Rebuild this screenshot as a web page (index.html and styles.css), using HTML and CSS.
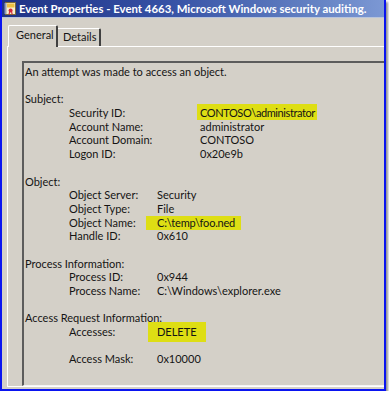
FILE: index.html
```html
<!DOCTYPE html>
<html lang="en">
<head>
    <meta charset="UTF-8">
    <title>Event Properties</title>
    <link rel="stylesheet" href="styles.css">
</head>
<body>
    <div class="window">
        <!-- Title bar -->
        <div class="titlebar">
            <svg class="app-icon" width="12" height="13" viewBox="0 0 12 13">
                <rect x="1.5" y="0.5" width="10" height="12" fill="#f6efd0" stroke="#7a6a3a"/>
                <rect x="0.5" y="1" width="2" height="11" fill="#8e9ab4"/>
                <rect x="3" y="1.5" width="7.5" height="4" fill="#ecc040"/>
                <circle cx="6.6" cy="8.6" r="2" fill="#d6283a"/>
                <path d="M5.6 10 L5 12.5 M7.6 10 L8.2 12.5" stroke="#d6283a" stroke-width="1.1"/>
            </svg>
            <span class="title-text">Event Properties - Event 4663, Microsoft Windows security auditing.</span>
        </div>

        <div class="client">
            <div class="tabs">
                <div class="tab active">General</div>
                <div class="tab">Details</div>
            </div>

            <div class="panel">
                <div class="event-text">
                    <p class="line">An attempt was made to access an object.</p>
                    <p class="line"></p>

                    <p class="line">Subject:</p>
                    <div class="field wide"><span>Security ID:</span><span><span class="hl hl-sid">CONTOSO\administrator</span></span></div>
                    <div class="field wide"><span>Account Name:</span><span>administrator</span></div>
                    <div class="field wide"><span>Account Domain:</span><span>CONTOSO</span></div>
                    <div class="field wide"><span>Logon ID:</span><span>0x20e9b</span></div>
                    <p class="line"></p>

                    <p class="line">Object:</p>
                    <div class="field"><span>Object Server:</span><span>Security</span></div>
                    <div class="field"><span>Object Type:</span><span>File</span></div>
                    <div class="field"><span>Object Name:</span><span><span class="hl hl-obj">C:\temp\foo.ned</span></span></div>
                    <div class="field"><span>Handle ID:</span><span>0x610</span></div>
                    <p class="line"></p>

                    <p class="line">Process Information:</p>
                    <div class="field"><span>Process ID:</span><span>0x944</span></div>
                    <div class="field"><span>Process Name:</span><span>C:\Windows\explorer.exe</span></div>
                    <p class="line"></p>

                    <p class="line">Access Request Information:</p>
                    <div class="field"><span>Accesses:</span><span><span class="hl hl-del">DELETE</span></span></div>
                    <p class="line"></p>
                    <div class="field"><span>Access Mask:</span><span>0x10000</span></div>
                </div>
            </div>
        </div>
    </div>
</body>
</html>
```

FILE: styles.css
```css
* {
    margin: 0;
    padding: 0;
    box-sizing: border-box;
}

body {
    background-color: #ffffff;
    font-family: 'Lato', 'Liberation Sans', sans-serif;
    color: #141414;
}

.window {
    width: 386px;
    height: 391px;
    border: 2px solid #0a14f0;
    border-top: none;
    background-color: #d4d0c8;
    box-shadow: 2px 2px 2px rgba(60, 60, 60, 0.55);
    display: flex;
    flex-direction: column;
    overflow: hidden;
}

/* Title bar */
.titlebar {
    height: 18px;
    flex-shrink: 0;
    display: flex;
    align-items: center;
    gap: 3px;
    padding-left: 2px;
    background: linear-gradient(to right, #1e3286, #3753a6 45%, #6886c6 85%, #7c98d4);
    border-bottom: 1px solid #b8c4dc;
}

.title-text {
    color: #ffffff;
    font-size: 11.4px;
    font-weight: bold;
    white-space: nowrap;
}

.client {
    flex: 1;
    padding: 7px 0 2px 5px;
    display: flex;
    flex-direction: column;
    overflow: hidden;
}

/* Tabs */
.tabs {
    display: flex;
    align-items: flex-end;
    padding-left: 1px;
    height: 21px;
    flex-shrink: 0;
    position: relative;
    z-index: 1;
}

.tab {
    font-size: 11px;
    width: 43px;
    height: 18px;
    padding-left: 5px;
    line-height: 16px;
    white-space: nowrap;
    border-top: 1px solid #ffffff;
    border-right: 2px solid #404040;
    border-top-right-radius: 2px;
    background-color: #d4d0c8;
}

.tab.active {
    width: 50px;
    height: 22px;
    margin-bottom: -1px;
    padding-left: 7px;
    line-height: 18px;
    border-left: 1px solid #ffffff;
    border-top-left-radius: 2px;
}

/* Tab page */
.panel {
    flex: 1;
    border-top: 1px solid #ffffff;
    border-left: 1px solid #ffffff;
    border-bottom: 1px solid #ffffff;
    padding: 14px 0 0 14px;
    display: flex;
    flex-direction: column;
}

.event-text {
    flex: 1;
    border-top: 2px solid #5c5c5c;
    border-left: 2px solid #5c5c5c;
    border-bottom: 1px solid #f4f4f4;
    padding: 2px 0 0 1px;
    font-size: 11px;
    line-height: 13.7px;
}

.line {
    height: 13.7px;
    white-space: nowrap;
}

.field {
    height: 13.7px;
    display: grid;
    grid-template-columns: 88px auto;
    padding-left: 44px;
    white-space: nowrap;
}

.field.wide {
    grid-template-columns: 131px auto;
}

/* Highlighter marks */
.hl {
    background-color: #dede14;
}

.hl-sid {
    letter-spacing: -0.4px;
    padding: 2px 2px 1px 3px;
    margin-left: -3px;
}

.hl-obj {
    letter-spacing: -0.2px;
    padding: 0 6px 1px 11px;
    margin-left: -11px;
}

.hl-del {
    padding: 3px 9px 4px 9px;
    margin-left: -9px;
}
```
